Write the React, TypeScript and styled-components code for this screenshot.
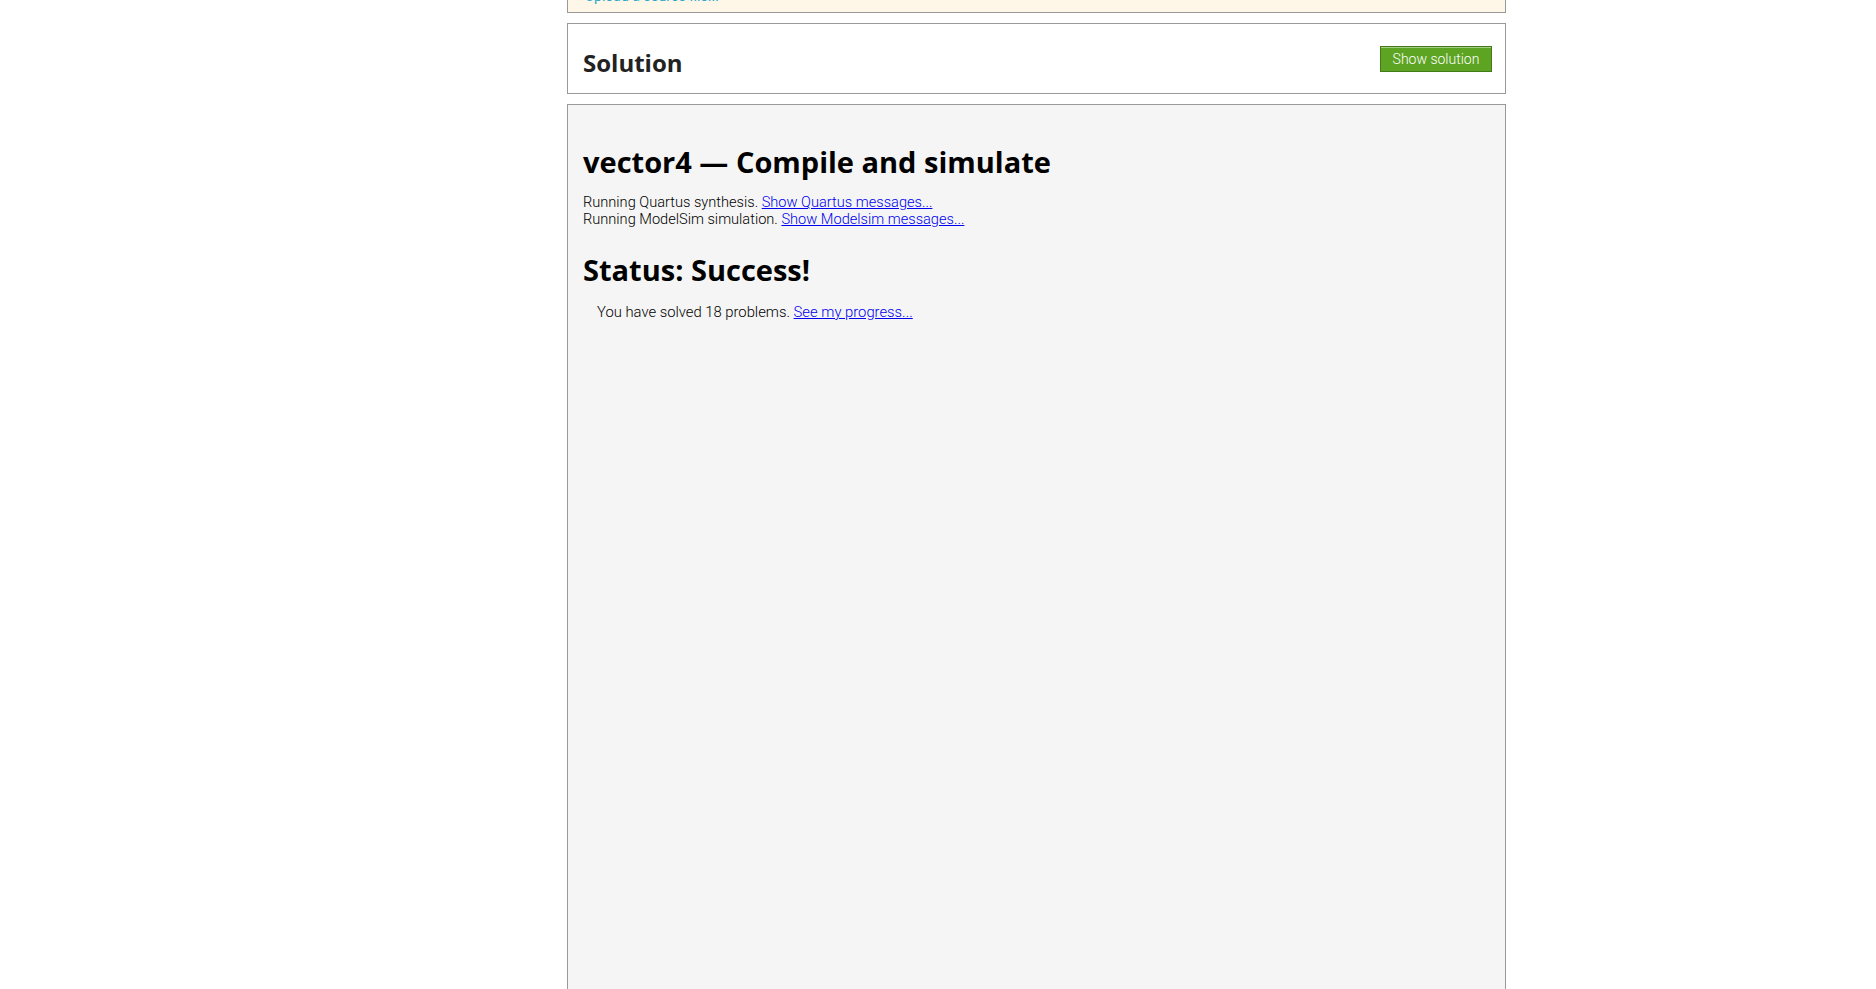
import React from "react";
import styled, { createGlobalStyle } from "styled-components";

const GlobalStyle = createGlobalStyle`
  html, body {
    margin: 0;
    padding: 0;
    background: #ffffff;
    overflow: hidden;
  }
  body {
    font-family: Roboto, "Liberation Sans", sans-serif;
    font-weight: 300;
    color: #000;
  }
`;

const Page = styled.div`
  display: grid;
  grid-template-columns: 567px 939px 1fr;
  height: 989px;
  overflow: hidden;
`;

const Sidebar = styled.aside``;

const Column = styled.main`
  display: flex;
  flex-direction: column;
  gap: 10px;
  margin-top: -27px;
`;

const Box = styled.section<{ $bg: string }>`
  box-sizing: border-box;
  border: 1px solid #999;
  background: ${(p) => p.$bg};
`;

const UploadBox = styled(Box)`
  height: 40px;
  padding: 12px 17px 0;
`;

const UploadLink = styled.a`
  font-size: 14px;
  line-height: 17px;
  color: #2ba6cb;
  text-decoration: none;
  font-weight: 400;
`;

const SolutionBox = styled(Box)`
  height: 71px;
  padding: 0 13px 0 15px;
  display: flex;
  justify-content: space-between;
  align-items: flex-start;
`;

const SectionTitle = styled.h3`
  margin: 25px 0 0;
  font-family: "Open Sans", sans-serif;
  font-weight: 700;
  font-size: 24px;
  line-height: 28.8px;
  color: #222;
`;

const GreenButton = styled.button`
  margin-top: 22px;
  box-sizing: border-box;
  width: 112px;
  height: 26px;
  background: #5da423;
  border: 1px solid #457a1a;
  box-shadow: inset 0 1px 0 rgba(255, 255, 255, 0.45);
  color: #fff;
  font-family: Roboto, "Liberation Sans", sans-serif;
  font-weight: 300;
  font-size: 14px;
  padding: 0;
  cursor: pointer;
`;

const ResultBox = styled(Box)`
  min-height: 1100px;
  padding: 39px 15px;
`;

const Title = styled.h1`
  margin: 0;
  font-family: "Open Sans", sans-serif;
  font-weight: 700;
  font-size: 29px;
  line-height: 35px;
  color: #000;
`;

const Log = styled.p`
  margin: 15px 0 0;
  font-size: 14.6px;
  line-height: 17px;
  color: #000;
`;

const Status = styled.h2`
  margin: 25px 0 0;
  font-family: "Open Sans", sans-serif;
  font-weight: 700;
  font-size: 29px;
  line-height: 34px;
  color: #000;
`;

const Progress = styled.p`
  margin: 17px 0 0 14px;
  font-size: 14.8px;
  line-height: 17px;
  color: #000;
`;

const Link = styled.a`
  color: #0000ee;
  text-decoration: underline;
`;

export default function App() {
  return (
    <>
      <GlobalStyle />
      <Page>
        <Sidebar />
        <Column>
          <UploadBox $bg="#fef6e6">
            <UploadLink href="#">Upload a source file... »</UploadLink>
          </UploadBox>
          <SolutionBox $bg="#ffffff">
            <SectionTitle>Solution</SectionTitle>
            <GreenButton>Show solution</GreenButton>
          </SolutionBox>
          <ResultBox $bg="#f5f5f5">
            <Title>vector4 — Compile and simulate</Title>
            <Log>
              Running Quartus synthesis. <Link href="#">Show Quartus messages...</Link>
              <br />
              Running ModelSim simulation. <Link href="#">Show Modelsim messages...</Link>
            </Log>
            <Status>Status: Success!</Status>
            <Progress>
              You have solved 18 problems. <Link href="#">See my progress...</Link>
            </Progress>
          </ResultBox>
        </Column>
        <div />
      </Page>
    </>
  );
}
